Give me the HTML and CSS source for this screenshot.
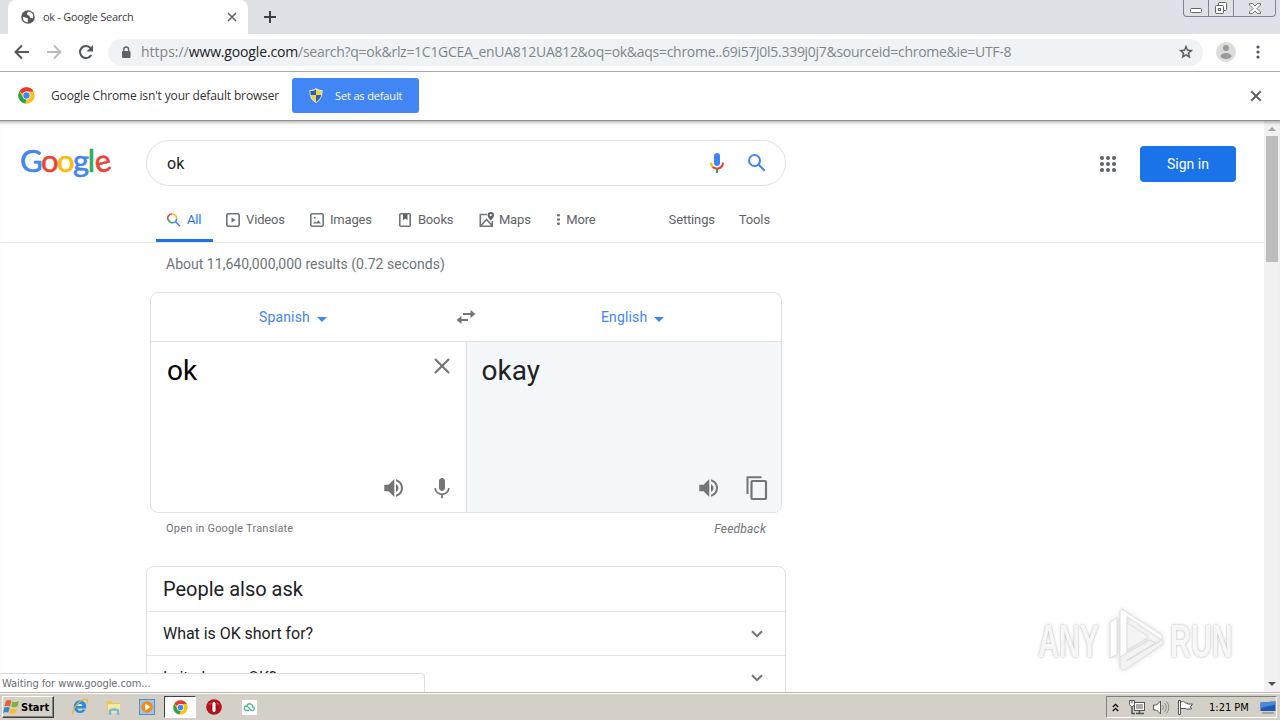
FILE: index.html
```html
<!DOCTYPE html>
<html lang="en">
<head>
    <meta charset="UTF-8">
    <meta name="viewport" content="width=device-width, initial-scale=1.0">
    <title>ok - Google Search</title>
    <link rel="stylesheet" href="styles.css">
</head>
<body>
    <!-- shared icons -->
    <svg class="defs" width="0" height="0">
        <symbol id="chrome" viewBox="0 0 48 48">
            <circle cx="24" cy="24" r="23" fill="#fbc116"/>
            <path d="M24 24L4 12.500A23 23 0 0 1 44 12.500L24 13z" fill="#e33b2e"/>
            <path d="M4 12.500L14.500 29.500 24 34.500 20.500 46.700A23 23 0 0 1 4 12.500z" fill="#2ba24c"/>
            <circle cx="24" cy="24" r="11" fill="#fff"/>
            <circle cx="24" cy="24" r="9" fill="#4285f4"/>
        </symbol>
        <symbol id="close" viewBox="0 0 10 10">
            <path d="M1 1l8 8M9 1L1 9" stroke="currentColor" stroke-width="1.600" fill="none"/>
        </symbol>
        <symbol id="speaker" viewBox="0 0 24 24">
            <path fill="currentColor" d="M2.300 8.700v6.600h4.300L12.300 21V3L6.600 8.700H2.300zm14.200 3.300c0-1.770-1.020-3.290-2.500-4.030v8.050c1.480-.73 2.500-2.250 2.500-4.020zM14 3.230v2.060c2.890.86 5 3.540 5 6.710s-2.110 5.850-5 6.710v2.060c4.010-.91 7-4.490 7-8.770s-2.990-7.860-7-8.770z"/>
        </symbol>
        <symbol id="chevron" viewBox="0 0 12 8">
            <path d="M1 1.200l5 5 5-5" stroke="#70757a" stroke-width="2" fill="none"/>
        </symbol>
    </svg>

    <div class="tabstrip">
        <div class="tab">
            <svg width="14" height="14" viewBox="0 0 14 14"><circle cx="7" cy="7" r="6.800" fill="#53575c"/><path d="M1.800 6.500L5 7.800l2 .7-.3 3.900C3.500 12.200 1.500 9.600 1.800 6.500zM7.500 1.500L5.800 3.600l.7 1.500 2 .7.600 2 2.800.6C13.300 4.800 10.800 1.800 7.500 1.500z" fill="#fff"/></svg>
            <span class="tab-title">ok - Google Search</span>
            <svg class="tab-close" width="10" height="10"><use href="#close"/></svg>
        </div>
        <svg class="new-tab" width="12" height="12" viewBox="0 0 12 12"><path d="M6 0v12M0 6h12" stroke="#3c4043" stroke-width="2"/></svg>
        <div class="win-buttons">
            <span class="win-min"><svg width="13" height="6" viewBox="0 0 13 6"><rect x=".5" y=".5" width="11" height="4" rx="1" fill="#fff" stroke="#60656e"/></svg></span>
            <span class="win-max"><svg width="14" height="14" viewBox="0 0 14 14"><g fill="#fff" stroke="#60656e"><rect x="4.500" y="1.500" width="8" height="8" rx="1"/><rect x="1.500" y="4.500" width="8" height="8" rx="1"/><rect x="4.500" y="7.500" width="2" height="2"/></g></svg></span>
            <span class="win-x"><svg width="12" height="11" viewBox="0 0 12 11"><path d="M.5 .5h3L6 3 8.500 .5h3v1.500L8 5.500l3.500 3.500v1.500h-3L6 8l-2.500 2.500h-3V9L4 5.500.5 2z" fill="#fff" stroke="#60656e" stroke-width=".9"/></svg></span>
        </div>
    </div>

    <div class="toolbar">
        <svg width="16" height="16" viewBox="0 0 16 16"><path d="M15 8H2M8 1.500L1.500 8 8 14.500" fill="none" stroke="#53575c" stroke-width="2"/></svg>
        <svg width="16" height="16" viewBox="0 0 16 16"><path d="M1 8h13M8 1.500L14.500 8 8 14.500" fill="none" stroke="#babcbe" stroke-width="1.800"/></svg>
        <svg width="16" height="16" viewBox="0 0 16 16"><path d="M13.200 11A6 6 0 1 1 12.400 3.900" fill="none" stroke="#53575c" stroke-width="2"/><path d="M15 1v6.500H8.500z" fill="#53575c"/></svg>
        <div class="omnibox">
            <svg width="10" height="13" viewBox="0 0 10 13"><rect x="1" y="5" width="8.500" height="7" rx="1" fill="#5f6368"/><path d="M2.800 5V3.400a2.400 2.400 0 0 1 4.800 0V5" stroke="#5f6368" stroke-width="1.400" fill="none"/></svg>
            <span class="url"><span class="url-scheme">https://</span><span class="url-host">www.google.com</span><span class="url-path">/search?q=ok&amp;rlz=1C1GCEA_enUA812UA812&amp;oq=ok&amp;aqs=chrome..69i57j0l5.339j0j7&amp;sourceid=chrome&amp;ie=UTF-8</span></span>
            <svg class="star" width="16" height="16" viewBox="0 0 24 24"><path d="M22 9.240l-7.190-.62L12 2 9.190 8.630 2 9.240l5.460 4.730L5.820 21 12 17.270 18.180 21l-1.630-7.030zM12 15.400l-3.760 2.270 1-4.280-3.320-2.880 4.380-.38L12 6.100l1.710 4.040 4.380.38-3.320 2.880 1 4.280z" fill="#53575c" stroke="#53575c" stroke-width=".6"/></svg>
        </div>
        <svg class="avatar" width="20" height="20" viewBox="0 0 20 20"><circle cx="10" cy="10" r="10" fill="#dcdcdc"/><circle cx="10" cy="6" r="3" fill="#9a9a9a"/><ellipse cx="10" cy="14" rx="5.500" ry="3" fill="#9a9a9a"/></svg>
        <svg class="kebab" width="4" height="14" viewBox="0 0 4 14"><g fill="#53575c"><circle cx="2" cy="2" r="1.600"/><circle cx="2" cy="7" r="1.600"/><circle cx="2" cy="12" r="1.600"/></g></svg>
    </div>

    <div class="infobar">
        <svg width="17" height="17"><use href="#chrome"/></svg>
        <span class="infobar-text">Google Chrome isn't your default browser</span>
        <div class="default-btn">
            <svg width="14" height="15" viewBox="0 0 14 15"><path d="M7 0c2 1.500 4 2 6.500 2 .3 6-1.500 10-6.500 13C2 12 .2 8 .5 2 3 2 5 1.500 7 0z" fill="#dfe6ee"/><path d="M7 1.500c1.800 1 3.500 1.500 5.500 1.500.2 5-1.500 8.500-5.500 11C3 11.500 1.300 8 1.500 3 3.500 3 5.500 2.500 7 1.500z" fill="#f5d33b"/><path d="M7 1.500V7H1.700C1.400 5.500 1.400 4 1.500 3 3.500 3 5.500 2.500 7 1.500zM7 7h5.300c-.7 3-2.500 5.200-5.300 7z" fill="#2863b4"/></svg>
            <span>Set as default</span>
        </div>
        <svg class="infobar-close" width="12" height="12"><use href="#close"/></svg>
    </div>

    <div class="viewport">
        <div class="page">
            <div class="header">
                <div class="logo"><span class="b">G</span><span class="r">o</span><span class="y">o</span><span class="b">g</span><span class="g">l</span><span class="r e">e</span></div>
                <div class="search">
                    <span class="query">ok</span>
                    <svg width="24" height="24" viewBox="0 0 24 24"><rect x="9" y="2" width="6" height="13" rx="3" fill="#4285f4"/><path d="M11 18h2v4h-2z" fill="#34a853"/><path d="M5 11.500h2c0 1.500.4 2.600 1.300 3.500l-1.400 1.500C5.700 15.300 5 13.600 5 11.500z" fill="#fbbc05"/><path d="M6.900 16.500l1.400-1.500c2.700 2.800 8.700 1.600 8.700-3.500h2c0 8-8.700 8.700-12.100 5z" fill="#ea4335"/></svg>
                    <svg width="24" height="24" viewBox="0 0 24 24"><path fill="#4285f4" d="M20.490 19l-5.730-5.730C15.530 12.200 16 10.910 16 9.500A6.500 6.500 0 1 0 9.500 16c1.410 0 2.700-.47 3.770-1.240L19 20.490 20.490 19zM5 9.500C5 7.010 7.010 5 9.500 5S14 7.010 14 9.500 11.990 14 9.500 14 5 11.990 5 9.500z"/></svg>
                </div>
                <svg class="apps" width="16" height="16" viewBox="0 0 16 16"><g fill="#5f6368"><circle cx="2" cy="2" r="2"/><circle cx="8" cy="2" r="2"/><circle cx="14" cy="2" r="2"/><circle cx="2" cy="8" r="2"/><circle cx="8" cy="8" r="2"/><circle cx="14" cy="8" r="2"/><circle cx="2" cy="14" r="2"/><circle cx="8" cy="14" r="2"/><circle cx="14" cy="14" r="2"/></g></svg>
                <div class="signin">Sign in</div>
            </div>

            <div class="nav">
                <div class="nav-item active">
                    <svg width="14" height="14" viewBox="0 0 14 14" fill="none" stroke-width="1.600"><path d="M1.200 7A4.200 4.200 0 0 1 5.300 1" stroke="#ea4335"/><path d="M5.300 1A4.200 4.200 0 0 1 9.600 5.500" stroke="#fbbc05"/><path d="M1.200 6.300A4.200 4.200 0 0 0 6 9.600" stroke="#34a853"/><path d="M9.600 5.500A4.200 4.200 0 0 1 5.500 9.700M8.300 8.500l4.700 4.700" stroke="#4285f4"/></svg>
                    <span>All</span>
                </div>
                <div class="nav-item videos">
                    <svg width="14" height="14" viewBox="0 0 14 14"><rect x=".8" y=".8" width="12.400" height="12.400" rx="1.500" fill="none" stroke="#70757a" stroke-width="1.600"/><path d="M5.500 4.200v5.600L9.500 7z" fill="#70757a"/></svg>
                    <span>Videos</span>
                </div>
                <div class="nav-item images">
                    <svg width="14" height="14" viewBox="0 0 14 14"><rect x=".8" y=".8" width="12.400" height="12.400" rx="1.500" fill="none" stroke="#70757a" stroke-width="1.600"/><path d="M3 10.500l2-2.300 1.300 1.300 2.200-2.300L11 10.500z" fill="#70757a"/><circle cx="4.800" cy="4.800" r="1" fill="#70757a"/></svg>
                    <span>Images</span>
                </div>
                <div class="nav-item books">
                    <svg width="12" height="14" viewBox="0 0 12 14"><rect x=".8" y=".8" width="10.400" height="12.400" rx="1" fill="none" stroke="#70757a" stroke-width="1.600"/><path d="M4 1h4.500v6.200L6.200 5.500 4 7.200z" fill="#5f6368"/></svg>
                    <span>Books</span>
                </div>
                <div class="nav-item maps">
                    <svg width="16" height="16" viewBox="0 0 16 16"><path d="M8 2.500H1.300v11.700h12V9M2 13.500l5.500-6 5.500 6" fill="none" stroke="#70757a" stroke-width="1.600"/><path d="M11.800 0a3.200 3.200 0 0 1 3.200 3.200c0 2.200-3.200 5.300-3.200 5.300S8.600 5.400 8.600 3.200A3.200 3.200 0 0 1 11.800 0zm0 2.100a1.100 1.100 0 1 0 0 2.200 1.100 1.100 0 0 0 0-2.200z" fill="#5f6368" fill-rule="evenodd"/></svg>
                    <span>Maps</span>
                </div>
                <div class="nav-item more">
                    <svg width="3" height="11" viewBox="0 0 3 11"><g fill="#70757a"><rect width="3" height="2.500" rx="1"/><rect y="4.200" width="3" height="2.500" rx="1"/><rect y="8.400" width="3" height="2.500" rx="1"/></g></svg>
                    <span>More</span>
                </div>
                <div class="nav-item settings"><span>Settings</span></div>
                <div class="nav-item tools"><span>Tools</span></div>
            </div>

            <div class="stats">About 11,640,000,000 results (0.72 seconds)</div>

            <div class="translate">
                <div class="langs">
                    <div class="lang">Spanish<i class="caret"></i></div>
                    <svg width="20" height="16" viewBox="0 0 20 16"><path d="M7 5h8M5 11h7" stroke="#757575" stroke-width="2"/><path d="M14.500 1l5 4-5 4zM5.500 7l-5 4 5 4z" fill="#757575"/></svg>
                    <div class="lang lang-to">English<i class="caret"></i></div>
                </div>
                <div class="panes">
                    <div class="pane">
                        <div class="pane-top">
                            <span class="word">ok</span>
                            <svg width="16" height="16" viewBox="0 0 16 16"><path d="M1 1l14 14M15 1L1 15" stroke="#757575" stroke-width="2.200"/></svg>
                        </div>
                        <div class="pane-tools">
                            <svg width="24" height="24"><use href="#speaker"/></svg>
                            <svg width="24" height="24" viewBox="0 0 24 24"><path fill="currentColor" d="M12 15c1.660 0 3-1.340 3-3V5c0-1.660-1.340-3-3-3S9 3.340 9 5v7c0 1.660 1.340 3 3 3zM17.900 12c0 3.300-2.800 5.300-5.900 5.300S6.100 15.300 6.100 12H4.400c0 3.700 2.900 6.500 6.700 7v3.200h1.800V19c3.800-.5 6.700-3.300 6.700-7z"/></svg>
                        </div>
                    </div>
                    <div class="pane target">
                        <div class="pane-top"><span class="word">okay</span></div>
                        <div class="pane-tools">
                            <svg width="24" height="24"><use href="#speaker"/></svg>
                            <svg width="24" height="24" viewBox="0 0 24 24"><path fill="none" stroke="currentColor" stroke-width="2" d="M2.500 18V1.200h14"/><rect x="6.500" y="5" width="14.500" height="18" rx="1" fill="none" stroke="currentColor" stroke-width="2.200"/></svg>
                        </div>
                    </div>
                </div>
            </div>
            <div class="translate-foot">
                <span>Open in Google Translate</span>
                <span class="feedback">Feedback</span>
            </div>

            <div class="paa">
                <div class="paa-title">People also ask</div>
                <div class="paa-row"><span>What is OK short for?</span><svg width="12" height="8"><use href="#chevron"/></svg></div>
                <div class="paa-row"><span>Is it okay or OK?</span><svg width="12" height="8"><use href="#chevron"/></svg></div>
            </div>
        </div>

        <div class="scrollbar">
            <i class="arrow-up"></i>
            <div class="thumb"></div>
            <i class="arrow-down"></i>
        </div>

        <div class="status">Waiting for www.google.com...</div>

        <div class="watermark">
            <span class="any">ANY</span>
            <svg width="62" height="66" viewBox="0 0 62 66" fill="none" stroke="#dedede" stroke-width="1">
                <path fill="#fff" d="M15 3.500c0-1.500 1.500-2.500 3-1.500L57 27v5L22 8.500V45l-7 4z"/>
                <path fill="#f3f3f3" d="M22 53l35-21c2 2 1 4-.5 5L21 61c-3 2-6 0-6-3v-9l30-17 5 3-28 17z"/>
                <path fill="#fff" d="M12 10L7 13c-2 1-2 2-2 4v33l7-3z"/>
                <path fill="#f4f4f4" d="M22 15v27l22-13z"/>
            </svg>
            <span class="run">RUN</span>
        </div>
    </div>

    <div class="taskbar">
        <div class="start">
            <svg width="17" height="16" viewBox="0 0 17 16"><path d="M3 2c2-1.500 4-1 5.500 0L7 7.500C5.500 6.500 3.500 6.500 1.500 7.500z" fill="#e8612c"/><path d="M9.500 2.500c2 1 4 .8 6.500-.5l-1.500 5.500c-2.500 1-4.500 1-6.300 0z" fill="#7db83b"/><path d="M1.200 8.700c2-1 4-1 5.500 0l-1.500 5C3.500 12.700 2 13 0 14z" fill="#3a86d6"/><path d="M7.700 9.200c2 1 4 .8 6.300 0l-1.500 5c-2 1-4 1-6.200 0z" fill="#f7bf2e"/></svg>
            <span>Start</span>
        </div>
        <div class="launch">
            <svg width="18" height="18" viewBox="0 0 18 18"><path d="M15 10.500H6.200a3 3 0 0 0 5.400 1h3A6.300 6.300 0 1 1 15 10.500z" fill="#2a8ddb"/><path d="M6.200 8h5.400a2.800 2.800 0 0 0-5.400 0z" fill="#e8f4fc"/><path d="M2.500 16.500C-.5 13 7 3.500 13 1.500c4-1 4 1.500 3 3.500" fill="none" stroke="#e6b52c" stroke-width="1.200"/></svg>
            <svg width="18" height="18" viewBox="0 0 18 18"><path d="M2 3h5l1 2h7v10H2z" fill="#e9c75b"/><path d="M3 6h12v9H3z" fill="#f9e8a0"/><path d="M5 17v-4c0-2 8-2 8 0v4" fill="none" stroke="#74b7df" stroke-width="2.500"/></svg>
            <svg width="16" height="16" viewBox="0 0 16 16"><rect x=".5" y=".5" width="15" height="15" fill="#9cc6ea" stroke="#4d8fc9"/><circle cx="8" cy="8" r="5.800" fill="#f38b13"/><path d="M6.200 4.500v7L11.500 8z" fill="#fff"/></svg>
            <div class="task-active"><svg width="15" height="15"><use href="#chrome"/></svg></div>
            <svg width="16" height="16" viewBox="0 0 16 16"><circle cx="8" cy="8" r="7.800" fill="#b5121b"/><path d="M2 5.500a7 5 0 0 1 12 0" fill="#d9413f"/><rect x="6" y="2.500" width="4" height="11" rx="2" fill="#fff" stroke="#7c0a10" stroke-width=".8"/></svg>
            <svg class="cloud" width="15" height="15" viewBox="0 0 15 15"><rect width="15" height="15" fill="#fff"/><path d="M7 10.500H4A2.300 2.300 0 0 1 4 6c1 0 2 .7 3.500 2.500S10 11 11 10.500c2-.6 1.800-3.500-.3-3.500C11 3 5.500 2.800 5 6" fill="none" stroke="#52b793" stroke-width="1.300"/></svg>
        </div>
        <div class="tray">
            <svg width="7" height="9" viewBox="0 0 7 9"><path d="M.8 4l2.700-2.700L6.200 4M.8 8l2.700-2.700L6.200 8" fill="none" stroke="#000" stroke-width="1.300"/></svg>
            <svg class="net" width="16" height="15" viewBox="0 0 16 15"><rect x="5.500" y="2.500" width="10" height="8" fill="#aaa" stroke="#555"/><rect x="6.500" y="3.500" width="8" height="6" fill="none" stroke="#fff"/><path d="M7 13.500h8M3 6v7.500h3M10.500 11v2" stroke="#555" stroke-width="1.500" fill="none"/><path d="M.5 .5h5v4l-1.500 2H2L.5 4.500zM3 .5v3" fill="#fff" stroke="#555"/></svg>
            <svg class="vol" width="17" height="15" viewBox="0 0 17 15"><path d="M.5 5h3l4-4v13l-4-4h-3z" fill="#fff" stroke="#555"/><path d="M9.500 5c1 1.500 1 3.500 0 5M11.500 3c2.300 2.500 2.300 6.500 0 9M13.500 1.500c3 3.500 3 8.500 0 12" fill="none" stroke="#888"/></svg>
            <svg class="flag" width="17" height="15" viewBox="0 0 17 15"><path d="M1.500 .5h2v14h-2zM3.500 2c3-1 4 0 5 1h2v1h5l-2 3 1 2H9.500L8 8.500H3.500z" fill="#fff" stroke="#555"/></svg>
            <span class="clock">1:21 PM</span>
            <svg class="desk" width="16" height="13" viewBox="0 0 16 13"><path d="M.5 1.500L15.500 .5v9.500L.5 10z" fill="#1f58b0"/><path d="M.5 1.500L15.500 .5v3L.5 7z" fill="#4a8bd8"/><path d="M2 12h12" stroke="#777"/></svg>
        </div>
    </div>
</body>
</html>
```
FILE: styles.css
```css
* {
    box-sizing: border-box;
}
body {
    margin: 0;
    width: 1280px;
    height: 720px;
    overflow: hidden;
    display: flex;
    flex-direction: column;
    background: #fff;
    font-family: Roboto, "Liberation Sans", sans-serif;
    color: #202124;
}
svg {
    display: block;
    flex: none;
}
.defs {
    position: absolute;
}
span, .lang, .stats {
    white-space: nowrap;
}

/* browser chrome */
.tabstrip {
    height: 34px;
    flex: none;
    display: flex;
    background: radial-gradient(circle at 0 26px, #dee1e6 8px, #fff 8.500px) 0 0 / 8px 34px no-repeat, radial-gradient(circle at 8px 26px, #dee1e6 8px, #fff 8.500px) 248px 0 / 8px 34px no-repeat, #dee1e6;
    background: #dee1e6;
    padding-left: 8px;
}
.tab {
    width: 240px;
    background: #fff;
    border-radius: 8px 8px 0 0;
    display: flex;
    align-items: center;
    padding: 0 11px 0 13px;
}
.tab-title {
    margin: -2px 0 0 8px;
    font-family: "Open Sans", sans-serif;
    font-size: 11px;
    letter-spacing: -.28px;
    color: #3c4043;
}
.tab-close {
    margin-left: auto;
    color: #5f6368;
}
.new-tab {
    margin: 11px 0 0 16px;
}
.win-buttons {
    display: flex;
    height: 17px;
    margin-left: auto;
    margin-right: 4px;
    border: 1px solid #7f858f;
    border-top: 0;
    border-radius: 0 0 4px 4px;
}
.win-buttons span {
    display: flex;
    justify-content: center;
    align-items: center;
    width: 25px;
    border-right: 1px solid #7f858f;
}
.win-buttons .win-min {
    align-items: flex-end;
    padding-bottom: 2px;
}
.win-buttons .win-x {
    width: 41px;
    border-right: 0;
}
.toolbar {
    height: 38px;
    flex: none;
    display: flex;
    align-items: center;
    gap: 16px;
    padding: 0 20px 1px 14px;
    border-bottom: 1px solid #a9acaf;
}
.omnibox {
    flex: 1;
    height: 27px;
    margin-left: -2px;
    display: flex;
    align-items: center;
    padding: 0 9px 0 13px;
    border-radius: 14px;
    background: #f0f3f5;
}
.url {
    margin: -2px 0 0 10px;
    font-family: "Open Sans", sans-serif;
    font-size: 14px;
    color: #80868b;
}
.url-host {
    color: #202124;
    letter-spacing: -.15px;
}
.url-path {
    letter-spacing: -.285px;
}
.star {
    margin-left: auto;
}
.avatar {
    margin-left: -3px;
}
.kebab {
    margin-left: 4px;
}
.infobar {
    height: 49px;
    flex: none;
    display: flex;
    align-items: center;
    padding: 0 18px 1px;
    border-bottom: 1px solid #8f8f8f;
    font-family: "Open Sans", sans-serif;
}
.infobar-text {
    margin-left: 16px;
    font-size: 12px;
    letter-spacing: -.15px;
    color: #333;
}
.default-btn {
    width: 127px;
    height: 35px;
    margin-left: 13px;
    display: flex;
    align-items: center;
    padding-left: 17px;
    gap: 12px;
    border-radius: 3px;
    background: #4285f4;
    color: #fff;
    font-size: 11px;
    letter-spacing: -.15px;
}
.infobar-close {
    margin-left: auto;
    color: #5f6368;
}

/* search page */
.viewport {
    position: relative;
    flex: 1;
    min-height: 0;
    display: flex;
    overflow: hidden;
    box-shadow: inset 0 4px 3px -2px rgba(0, 0, 0, .25);
}
.page {
    width: 1264px;
    padding-top: 19px;
}
.header {
    display: flex;
    align-items: center;
    height: 46px;
    padding: 0 28px 0 20px;
}
.logo {
    width: 126px;
    margin-top: -6px;
    font-family: Lato, sans-serif;
    font-size: 31px;
    letter-spacing: -1.500px;
    -webkit-text-stroke: .6px currentColor;
}
.b { color: #4285f4; }
.r { color: #ea4335; }
.y { color: #fbbc05; }
.g { color: #34a853; }
.e {
    display: inline-block;
    transform: rotate(-14deg);
}
.search {
    width: 640px;
    height: 46px;
    display: flex;
    align-items: center;
    gap: 16px;
    padding: 0 16px 0 20px;
    border: 1px solid #dfe1e5;
    border-radius: 23px;
}
.query {
    flex: 1;
    font-size: 16px;
}
.apps {
    margin: 2px 0 0 auto;
}
.signin {
    width: 96px;
    height: 36px;
    margin: 2px 0 0 24px;
    border-radius: 4px;
    background: #1a73e8;
    color: #fff;
    font-size: 14px;
    line-height: 36px;
    text-align: center;
}
.nav {
    display: flex;
    height: 57px;
    padding-left: 156px;
    border-bottom: 1px solid #ebebeb;
}
.nav-item {
    display: flex;
    align-items: center;
    height: 56px;
    padding-top: 11px;
    font-size: 13px;
    letter-spacing: -.15px;
    color: #5f6368;
    gap: 6px;
}
.active {
    width: 57px;
    padding-left: 11px;
    border-bottom: 3px solid #1a73e8;
    color: #1a73e8;
    padding-top: 14px;
}
.videos {
    margin-left: 13px;
}
.images {
    margin-left: 25px;
}
.books {
    margin-left: 27px;
    gap: 7px;
}
.maps {
    margin-left: 25.500px;
    gap: 4px;
}
.more {
    margin-left: 26.500px;
}
.settings {
    margin-left: 73px;
}
.tools {
    margin-left: 24px;
}
.stats {
    margin: 12px 0 0 166px;
    font-size: 14px;
    line-height: 18px;
    letter-spacing: .02px;
    color: #70757a;
}
.translate {
    width: 632px;
    height: 221px;
    margin: 19px 0 0 150px;
    border: 1px solid #dfe1e5;
    border-radius: 8px;
    overflow: hidden;
}
.langs {
    height: 49px;
    display: flex;
    align-items: center;
    border-bottom: 1px solid #dfe1e5;
    color: #4285f4;
    font-size: 14px;
    letter-spacing: .15px;
}
.lang {
    width: 305px;
    padding-left: 108px;
    display: flex;
    align-items: center;
}
.lang-to {
    padding-left: 125px;
}
.caret {
    margin: 4px 0 0 7px;
    border: 5px solid transparent;
    border-top-color: #4285f4;
    border-bottom: 0;
}
.panes {
    display: flex;
    height: 171px;
}
.pane {
    width: 315px;
    padding: 12px 12px 13px 16px;
    display: flex;
    flex-direction: column;
    justify-content: space-between;
    color: #757575;
}
.target {
    width: 316px;
    border-left: 1px solid #dfe1e5;
    background: #f5f8fb;
    padding-left: 15px;
}
.pane-top {
    display: flex;
    justify-content: space-between;
    align-items: center;
    padding-right: 4px;
}
.pane-top svg {
    margin-top: -11px;
}
.word {
    font-size: 28px;
    line-height: 34px;
    color: #000;
}
.target .word {
    color: #202124;
}
.pane-tools {
    display: flex;
    justify-content: flex-end;
    gap: 24px;
}
.translate-foot {
    display: flex;
    justify-content: space-between;
    width: 600px;
    margin: 9px 0 0 166px;
    font-size: 11px;
    line-height: 14px;
    letter-spacing: .2px;
    color: #70757a;
}
.feedback {
    font-size: 12px;
    font-style: italic;
}
.paa {
    width: 640px;
    margin: 30px 0 0 146px;
    border: 1px solid #dfe1e5;
    border-radius: 8px;
}
.paa-title {
    height: 44px;
    padding-left: 16px;
    font-size: 20px;
    line-height: 44px;
}
.paa-row {
    height: 44px;
    display: flex;
    align-items: center;
    justify-content: space-between;
    padding: 0 22px 0 16px;
    border-top: 1px solid #dfe1e5;
    font-size: 16px;
    letter-spacing: -.04px;
}
.scrollbar {
    width: 16px;
    display: flex;
    flex-direction: column;
    align-items: center;
    padding: 6px 0 4px;
    background: rgba(0, 0, 0, .055);
}
.thumb {
    width: 12px;
    height: 126px;
    margin: 5px 0 auto;
    background: #bdbdbd;
}
.arrow-up {
    border: 4px solid transparent;
    border-bottom-color: #a3a3a3;
    border-top: 0;
}
.arrow-down {
    border: 4px solid transparent;
    border-top-color: #505050;
    border-bottom: 0;
    margin-bottom: 2px;
}
.status {
    position: absolute;
    left: 0;
    bottom: 0;
    width: 425px;
    height: 19px;
    padding-left: 2px;
    border: 1px solid #dadce0;
    border-left: 0;
    border-bottom: 0;
    border-top-right-radius: 4px;
    background: #fff;
    font-family: "DejaVu Sans Condensed", "DejaVu Sans", sans-serif;
    font-size: 11px;
    line-height: 19px;
    letter-spacing: -.07px;
    color: #6b6e72;
}
.watermark {
    position: absolute;
    left: 1038px;
    top: 487px;
    display: flex;
    align-items: center;
    font-family: "Liberation Sans", sans-serif;
    font-size: 46px;
    font-weight: bold;
    color: #f6f6f6;
    text-shadow: 0 0 3px rgba(0, 0, 0, .35);
}
.watermark span {
    display: block;
    width: 64px;
    transform-origin: left center;
    transform: scaleX(.63);
}
.watermark svg {
    margin: 0 3px;
    filter: drop-shadow(0 0 2px rgba(0, 0, 0, .15));
}

/* windows taskbar */
.taskbar {
    height: 28px;
    flex: none;
    display: flex;
    align-items: center;
    padding: 1px 3px 0 2px;
    border-top: 1px solid #b9b6ae;
    box-shadow: inset 0 1px #fff;
    background: #d4d0c8;
    font-family: "DejaVu Sans Condensed", "DejaVu Sans", sans-serif;
    font-size: 11px;
    color: #000;
}
.start {
    width: 52px;
    height: 22px;
    display: flex;
    align-items: center;
    gap: 1px;
    border: 1px solid;
    border-color: #fff #404040 #404040 #fff;
    box-shadow: inset -1px -1px #808080;
    font-weight: bold;
}
.launch {
    display: flex;
    align-items: center;
    margin-left: 17px;
    gap: 16px;
}
.task-active {
    width: 32px;
    height: 22px;
    margin: 0 -6px 0 -7px;
    display: flex;
    align-items: center;
    justify-content: center;
    border: 1px solid;
    border-color: #404040 #fff #fff #404040;
    background: #fff;
}
.cloud {
    margin-left: 4px;
}
.tray {
    display: flex;
    align-items: center;
    width: 171px;
    height: 22px;
    margin-left: auto;
    padding: 0 0 0 5px;
    border: 1px solid;
    border-color: #808080 #fff #fff #808080;
}
.net {
    margin-left: 10px;
}
.vol {
    margin-left: 8px;
}
.flag {
    margin-left: 7px;
}
.clock {
    margin-left: 15px;
}
.desk {
    margin-left: auto;
}
```
